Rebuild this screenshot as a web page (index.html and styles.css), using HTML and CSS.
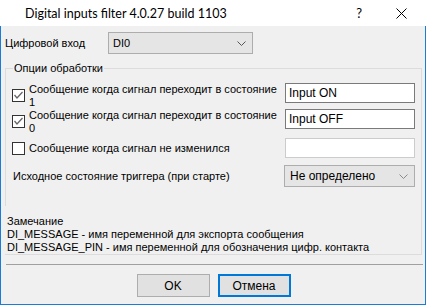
FILE: index.html
```html
<!DOCTYPE html>
<html lang="ru">
<head>
  <meta charset="UTF-8">
  <title>Digital inputs filter</title>
  <link rel="stylesheet" href="styles.css">
</head>
<body>
  <div class="window">
    <div class="titlebar">
      <span class="title">Digital inputs filter 4.0.27 build 1103</span>
      <span class="help">?</span>
      <svg class="close" width="11" height="11" viewBox="0 0 11 11">
        <path d="M0.5 0.5 L10.5 10.5 M10.5 0.5 L0.5 10.5" stroke="#000" stroke-width="1"/>
      </svg>
    </div>

    <div class="client">
      <div class="top-row">
        <span class="top-label">Цифровой вход</span>
        <div class="combo combo-di">
          <span>DI0</span>
          <svg width="9" height="5" viewBox="0 0 9 5"><polyline points="0.5,0.5 4.5,4.5 8.5,0.5" fill="none" stroke="#555" stroke-width="1"/></svg>
        </div>
      </div>

      <fieldset class="group">
        <legend>Опции обработки</legend>

        <div class="opt opt-two">
          <div class="check checked">
            <svg width="11" height="11" viewBox="0 0 11 11"><polyline points="1.5,5 4,8 9.5,2" fill="none" stroke="#666" stroke-width="1.3"/></svg>
          </div>
          <span class="opt-text">Сообщение когда сигнал переходит в состояние<br>1</span>
          <div class="edit">Input ON</div>
        </div>

        <div class="opt opt-two">
          <div class="check checked">
            <svg width="11" height="11" viewBox="0 0 11 11"><polyline points="1.5,5 4,8 9.5,2" fill="none" stroke="#666" stroke-width="1.3"/></svg>
          </div>
          <span class="opt-text">Сообщение когда сигнал переходит в состояние<br>0</span>
          <div class="edit">Input OFF</div>
        </div>

        <div class="opt opt-one">
          <div class="check"></div>
          <span class="opt-text">Сообщение когда сигнал не изменился</span>
          <div class="edit disabled"></div>
        </div>

        <div class="trigger-row">
          <span class="trigger-label">Исходное состояние триггера (при старте)</span>
          <div class="combo combo-state">
            <span>Не определено</span>
            <svg width="9" height="5" viewBox="0 0 9 5"><polyline points="0.5,0.5 4.5,4.5 8.5,0.5" fill="none" stroke="#8a8a8a" stroke-width="1"/></svg>
          </div>
        </div>

        <div class="note">
          Замечание<br>
          DI_MESSAGE - имя переменной для экспорта сообщения<br>
          DI_MESSAGE_PIN - имя переменной для обозначения цифр. контакта
        </div>
      </fieldset>

      <div class="sep"></div>

      <div class="buttons">
        <button class="btn">OK</button>
        <button class="btn btn-focus">Отмена</button>
      </div>
    </div>
  </div>
</body>
</html>
```

FILE: styles.css
```css
body {
  margin: 0;
  font-family: "Liberation Sans", Arial, sans-serif;
  font-size: 11px;
  color: #000;
  background: #fff;
}

.window {
  width: 426px;
  height: 305px;
}

.titlebar {
  height: 26px;
  background: #fff;
  display: flex;
  align-items: center;
  font-family: Lato, "Noto Sans", sans-serif;
  font-size: 12.5px;
}

.title {
  margin-left: 25px;
  flex: 1;
}

.help {
  font-size: 13px;
  margin-right: 34px;
}

.close {
  margin-right: 19px;
}

.client {
  box-sizing: border-box;
  height: 279px;
  background: #f0f0f0;
  border: 1px solid #1c7bd6;
  border-top: none;
  padding: 6px 3px 0 4px;
}

.top-row {
  display: flex;
  align-items: center;
  height: 22px;
}

.top-label {
  width: 103px;
}

.combo {
  box-sizing: border-box;
  height: 22px;
  background: #e5e5e5;
  border: 1px solid #adadad;
  display: flex;
  align-items: center;
  justify-content: space-between;
  padding: 0 6px 0 4px;
}

.combo-di {
  width: 145px;
}

.group {
  margin: 8px 0 0 0;
  padding: 8px 6px 0 6px;
  border: 1px solid #dcdcdc;
  min-width: 0;
}

.group legend {
  padding: 0 1px;
  margin-left: 1px;
  line-height: 13px;
}

.opt {
  display: flex;
  align-items: flex-start;
  line-height: 13px;
}

.opt-two {
  height: 26px;
}

.opt-two .check {
  margin-top: 6px;
}

.opt-one {
  margin-top: 3px;
  height: 20px;
  align-items: center;
}

.check {
  box-sizing: border-box;
  width: 13px;
  height: 13px;
  border: 1px solid #333;
  background: #fff;
  display: flex;
  align-items: center;
  justify-content: center;
  margin-right: 4px;
  flex-shrink: 0;
}

.opt-text {
  width: 256px;
}

.edit {
  box-sizing: border-box;
  width: 130px;
  height: 20px;
  background: #fff;
  border: 1px solid #7a7a7a;
  padding: 2px 0 0 3px;
  font-size: 12px;
  line-height: 14px;
}

.edit.disabled {
  border-color: #cccccc;
}

.trigger-row {
  margin-top: 7px;
  display: flex;
  align-items: center;
  height: 22px;
}

.trigger-label {
  margin-left: 1px;
  width: 271px;
}

.combo-state {
  width: 131px;
  height: 22px;
  font-size: 12px;
  padding-left: 5px;
}

.note {
  margin: 19px 0 0 -7px;
  padding: 9px 0 0 2px;
  background: #f0f0f0;
  line-height: 13px;
  font-size: 11px;
}

.sep {
  margin-top: 9px;
  margin-left: 1px;
  width: 417px;
  height: 1px;
  background: #a0a0a0;
}

.buttons {
  display: flex;
  justify-content: center;
  gap: 8px;
  margin-top: 9px;
}

.btn {
  box-sizing: border-box;
  width: 73px;
  height: 23px;
  background: #e1e1e1;
  border: 1px solid #adadad;
  font-family: "Liberation Sans", Arial, sans-serif;
  font-size: 12px;
  padding: 0;
}

.btn-focus {
  border: 2px solid #0078d7;
}
```
